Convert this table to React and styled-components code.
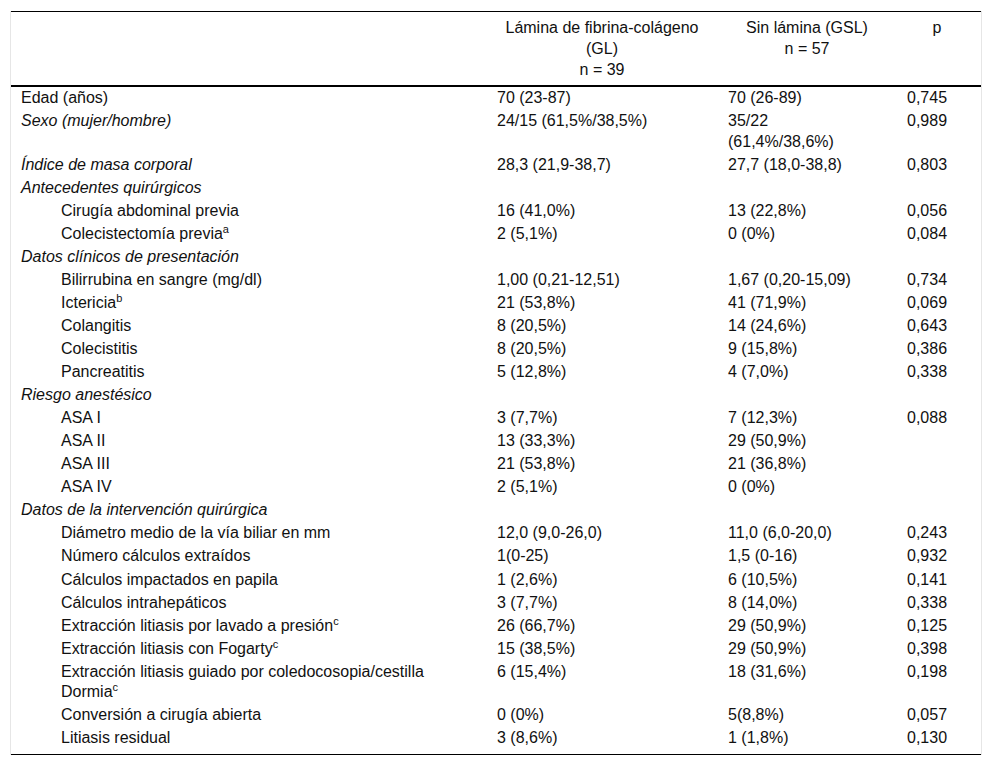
import React from 'react';
import styled, { createGlobalStyle } from 'styled-components';

const GlobalStyle = createGlobalStyle`
    body {
        margin: 0;
        background: #fff;
        font-family: "Liberation Sans", Arial, sans-serif;
        color: #111;
    }
`;

const Page = styled.div`
    padding: 11px 10px 10px;
`;

const Frame = styled.div`
    border-left: 1px solid #e6e6e6;
    border-right: 1px solid #e6e6e6;
`;

const Table = styled.table`
    width: 100%;
    border-collapse: collapse;
    table-layout: fixed;
    border-top: 1px solid #000;
    border-bottom: 1px solid #000;
    font-size: 16px;
    line-height: 20.5px;
`;

const HeadCell = styled.th`
    font-weight: normal;
    text-align: center;
    vertical-align: top;
    line-height: 21px;
    padding: 5px 14px 5px 7px;
    border-bottom: 2px solid #000;
    &:first-child {
        padding-left: 10px;
    }
`;

const Row = styled.tr`
    &:last-child td {
        padding-bottom: 5.5px;
    }
`;

const Cell = styled.td`
    vertical-align: top;
    text-align: left;
    padding: 1.4px 14px 1.15px 7px;
    &:first-child {
        padding-left: ${(p) => (p.$indent ? '50px' : '10px')};
        font-style: ${(p) => (p.$italic ? 'italic' : 'normal')};
    }
`;

const Sup = styled.sup`
    font-size: 11px;
    line-height: 0;
    vertical-align: 6px;
`;

const rows = [
    { label: 'Edad (años)', gl: '70 (23-87)', gsl: '70 (26-89)', p: '0,745' },
    { label: 'Sexo (mujer/hombre)', italic: true, gl: '24/15 (61,5%/38,5%)', gsl: <>35/22<br />(61,4%/38,6%)</>, p: '0,989' },
    { label: 'Índice de masa corporal', italic: true, gl: '28,3 (21,9-38,7)', gsl: '27,7 (18,0-38,8)', p: '0,803' },
    { label: 'Antecedentes quirúrgicos', italic: true },
    { label: 'Cirugía abdominal previa', indent: true, gl: '16 (41,0%)', gsl: '13 (22,8%)', p: '0,056' },
    { label: 'Colecistectomía previa', sup: 'a', indent: true, gl: '2 (5,1%)', gsl: '0 (0%)', p: '0,084' },
    { label: 'Datos clínicos de presentación', italic: true },
    { label: 'Bilirrubina en sangre (mg/dl)', indent: true, gl: '1,00 (0,21-12,51)', gsl: '1,67 (0,20-15,09)', p: '0,734' },
    { label: 'Ictericia', sup: 'b', indent: true, gl: '21 (53,8%)', gsl: '41 (71,9%)', p: '0,069' },
    { label: 'Colangitis', indent: true, gl: '8 (20,5%)', gsl: '14 (24,6%)', p: '0,643' },
    { label: 'Colecistitis', indent: true, gl: '8 (20,5%)', gsl: '9 (15,8%)', p: '0,386' },
    { label: 'Pancreatitis', indent: true, gl: '5 (12,8%)', gsl: '4 (7,0%)', p: '0,338' },
    { label: 'Riesgo anestésico', italic: true },
    { label: 'ASA I', indent: true, gl: '3 (7,7%)', gsl: '7 (12,3%)', p: '0,088' },
    { label: 'ASA II', indent: true, gl: '13 (33,3%)', gsl: '29 (50,9%)' },
    { label: 'ASA III', indent: true, gl: '21 (53,8%)', gsl: '21 (36,8%)' },
    { label: 'ASA IV', indent: true, gl: '2 (5,1%)', gsl: '0 (0%)' },
    { label: 'Datos de la intervención quirúrgica', italic: true },
    { label: 'Diámetro medio de la vía biliar en mm', indent: true, gl: '12,0 (9,0-26,0)', gsl: '11,0 (6,0-20,0)', p: '0,243' },
    { label: 'Número cálculos extraídos', indent: true, gl: '1(0-25)', gsl: '1,5 (0-16)', p: '0,932' },
    { label: 'Cálculos impactados en papila', indent: true, gl: '1 (2,6%)', gsl: '6 (10,5%)', p: '0,141' },
    { label: 'Cálculos intrahepáticos', indent: true, gl: '3 (7,7%)', gsl: '8 (14,0%)', p: '0,338' },
    { label: 'Extracción litiasis por lavado a presión', sup: 'c', indent: true, gl: '26 (66,7%)', gsl: '29 (50,9%)', p: '0,125' },
    { label: 'Extracción litiasis con Fogarty', sup: 'c', indent: true, gl: '15 (38,5%)', gsl: '29 (50,9%)', p: '0,398' },
    { label: <>Extracción litiasis guiado por coledocosopia/cestilla<br />Dormia</>, sup: 'c', indent: true, gl: '6 (15,4%)', gsl: '18 (31,6%)', p: '0,198' },
    { label: 'Conversión a cirugía abierta', indent: true, gl: '0 (0%)', gsl: '5(8,8%)', p: '0,057' },
    { label: 'Litiasis residual', indent: true, gl: '3 (8,6%)', gsl: '1 (1,8%)', p: '0,130' },
];

export default function App() {
    return (
        <Page>
            <GlobalStyle />
            <Frame>
                <Table>
                    <colgroup>
                        <col style={{ width: 479 }} />
                        <col style={{ width: 231 }} />
                        <col style={{ width: 179 }} />
                        <col />
                    </colgroup>
                    <thead>
                        <tr>
                            <HeadCell />
                            <HeadCell>Lámina de fibrina-colágeno<br />(GL)<br />n = 39</HeadCell>
                            <HeadCell>Sin lámina (GSL)<br />n = 57</HeadCell>
                            <HeadCell>p</HeadCell>
                        </tr>
                    </thead>
                    <tbody>
                        {rows.map((r, i) => (
                            <Row key={i}>
                                <Cell $indent={r.indent} $italic={r.italic}>
                                    {r.label}
                                    {r.sup && <Sup>{r.sup}</Sup>}
                                </Cell>
                                <Cell>{r.gl}</Cell>
                                <Cell>{r.gsl}</Cell>
                                <Cell>{r.p}</Cell>
                            </Row>
                        ))}
                    </tbody>
                </Table>
            </Frame>
        </Page>
    );
}
